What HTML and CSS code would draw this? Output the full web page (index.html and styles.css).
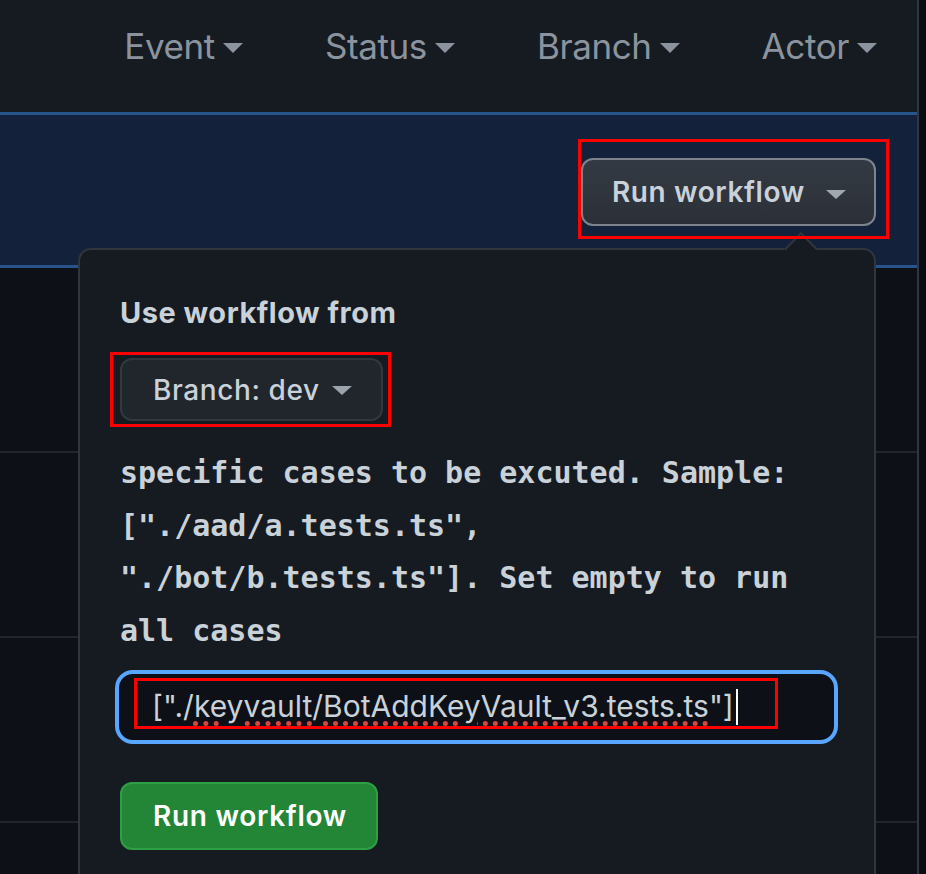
FILE: index.html
```html
<!DOCTYPE html>
<html>
<head>
<meta charset="utf-8">
<link rel="stylesheet" href="styles.css">
</head>
<body>
<div class="main">
  <div class="header">
    <div class="filter">Event <span class="caret"></span></div>
    <div class="filter">Status <span class="caret"></span></div>
    <div class="filter">Branch <span class="caret"></span></div>
    <div class="filter">Actor <span class="caret"></span></div>
  </div>
  <div class="band">
    <button class="run-btn">Run workflow <span class="caret small"></span></button>
  </div>
  <div class="rows">
    <div class="row"></div>
    <div class="row"></div>
    <div class="row"></div>
  </div>
</div>

<div class="popover">
  <div class="pop-title">Use workflow from</div>
  <button class="branch-btn">Branch: dev <span class="caret small"></span></button>
  <div class="mono-label">specific cases to be excuted. Sample: ["./aad/a.tests.ts", "./bot/b.tests.ts"]. Set empty to run all cases</div>
  <div class="input">
    <span class="input-text">["./<span class="spell">keyvault</span>/<span class="spell">BotAddKeyVault_v3.tests.ts</span>"]</span><span class="cursor"></span>
  </div>
  <button class="green-btn">Run workflow</button>
</div>

<div class="mark mark-run"></div>
<div class="mark mark-branch"></div>
<div class="mark mark-input"></div>
</body>
</html>
```
FILE: styles.css
```css
* { box-sizing: border-box; }
html, body {
  margin: 0;
  padding: 0;
  height: 874px;
  overflow: hidden;
  background: #0a0d12;
  font-family: Inter, "Noto Sans", "Liberation Sans", sans-serif;
}
.main {
  width: 919px;
  height: 874px;
  border-right: 2px solid #30363d;
  background: #0d1117;
  overflow: hidden;
}
.header {
  height: 112px;
  background: #161b22;
  display: flex;
  justify-content: flex-end;
  align-items: flex-start;
  gap: 82px;
  padding-right: 40px;
  padding-top: 25px;
}
.filter {
  display: flex;
  align-items: center;
  gap: 8px;
  color: #8b949e;
  font-size: 35px;
  line-height: 42px;
  letter-spacing: -0.4px;
}
.caret {
  display: inline-block;
  width: 0;
  height: 0;
  border-left: 10px solid transparent;
  border-right: 10px solid transparent;
  border-top: 10px solid #8b949e;
}
.filter .caret { margin-top: 3px; }
.caret.small {
  border-left-width: 10px;
  border-right-width: 10px;
  border-top-width: 9px;
}
.band {
  height: 156px;
  background: #14213a;
  border-top: 3px solid #28548c;
  border-bottom: 3px solid #28548c;
  display: flex;
  justify-content: flex-end;
  align-items: flex-start;
  padding-top: 43px;
  padding-right: 41px;
}
.run-btn {
  width: 295px;
  height: 68px;
  border-radius: 12px;
  border: 2px solid #7d848d;
  background: linear-gradient(#343a43, #2b3038);
  color: #c9d1d9;
  font-family: inherit;
  font-size: 28px;
  font-weight: 600;
  letter-spacing: 0.6px;
  display: flex;
  align-items: center;
  padding-left: 29px;
  gap: 21px;
}
.run-btn .caret { margin-top: 4px; border-top-color: #a0a7b0; }
.row {
  height: 185px;
  border-bottom: 2px solid #21262d;
}
.popover {
  position: absolute;
  left: 78px;
  top: 248px;
  width: 798px;
  height: 626px;
  background: #161b22;
  border: 2px solid #30363d;
  border-bottom: 0;
  border-radius: 13px 13px 0 0;
  padding: 43px 40px 0 40px;
  color: #c9d1d9;
}
.popover::before {
  content: "";
  position: absolute;
  left: 709px;
  top: -13px;
  width: 22px;
  height: 22px;
  background: #161b22;
  border-left: 2px solid #30363d;
  border-top: 2px solid #30363d;
  transform: rotate(45deg);
}
.pop-title {
  font-size: 29px;
  font-weight: 700;
  letter-spacing: 0.5px;
  line-height: 40px;
  height: 40px;
}
.branch-btn {
  margin-top: 25px;
  width: 263px;
  height: 63px;
  border-radius: 12px;
  border: 2px solid #33383f;
  background: #21262d;
  color: #c9d1d9;
  font-family: inherit;
  font-size: 28px;
  font-weight: 500;
  letter-spacing: 0.6px;
  display: flex;
  align-items: center;
  padding-left: 31px;
  gap: 12px;
}
.branch-btn .caret { margin-top: 2px; border-top-color: #9ba3ad; }
.mono-label {
  margin-top: 26px;
  width: 716px;
  font-family: "DejaVu Sans Mono", "Liberation Mono", monospace;
  font-weight: 700;
  font-size: 30px;
  line-height: 52.5px;
  color: #c9d1d9;
}
.input {
  margin-top: 13px;
  margin-left: -5px;
  width: 723px;
  height: 74px;
  border: 4px solid #58a6ff;
  border-radius: 18px;
  background: #0d1117;
  display: flex;
  align-items: center;
  padding-left: 33px;
}
.input-text {
  font-size: 30px;
  color: #c9d1d9;
  letter-spacing: 0px;
  margin-top: -2px;
}
.spell {
  text-decoration: underline dotted #d8453e;
  text-decoration-thickness: 5px;
  text-underline-offset: 4px;
}
.cursor {
  display: inline-block;
  width: 2px;
  height: 36px;
  background: #ffffff;
  margin-left: 2px;
}
.green-btn {
  margin-top: 38px;
  width: 258px;
  height: 68px;
  border-radius: 12px;
  border: 2px solid #2ea043;
  background: #238636;
  color: #ffffff;
  font-family: inherit;
  font-size: 28px;
  font-weight: 600;
  letter-spacing: 0.7px;
  display: flex;
  align-items: center;
  padding-left: 31px;
}
.mark {
  position: absolute;
  border: 3px solid #ff0000;
}
.mark-run { left: 578px; top: 139px; width: 311px; height: 100px; }
.mark-branch { left: 110px; top: 352px; width: 281px; height: 75px; }
.mark-input { left: 134px; top: 678px; width: 644px; height: 51px; }
```
